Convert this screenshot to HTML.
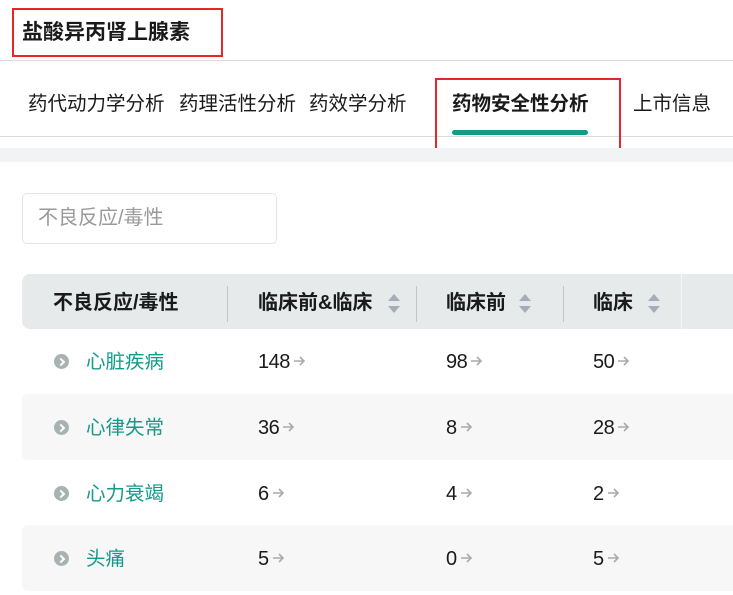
<!DOCTYPE html>
<html><head><meta charset="utf-8"><style>
*{margin:0;padding:0;box-sizing:border-box}
body{width:733px;height:595px;background:#fff;position:relative;overflow:hidden;font-family:"Liberation Sans","Noto Sans CJK SC",sans-serif;color:#1a1a1a}
.a{position:absolute;white-space:nowrap}
.tab{font-size:19.5px;top:91px;line-height:26px}
.h{font-size:20px;font-weight:bold;top:290px;line-height:26px}
.div{position:absolute;top:286px;width:1px;height:36px;background:#bfc6c6}
.sort{position:absolute;top:291px;width:14px;height:25px}
.row{position:absolute;left:22px;width:711px;height:66px}
.c{font-size:19.5px;line-height:26px}
.num{font-size:20px;letter-spacing:-0.5px}
.n{color:#139a88}
.ar{display:inline-block;width:13px;height:12px;margin-left:3px;vertical-align:1px}
.ic{position:absolute;left:54px;width:15px;height:15px;border-radius:50%;background:#a9b2b2}
.ic:after{content:"";position:absolute;left:3.5px;top:4.5px;width:4px;height:4px;border-right:2px solid #fff;border-top:2px solid #fff;transform:rotate(45deg)}
</style></head><body>
<svg width="0" height="0" style="position:absolute"><defs><symbol id="arr" viewBox="0 0 13 12"><path d="M1 6H11M7 2L11 6L7 10" stroke="#aaa" stroke-width="1.6" fill="none"/></symbol></defs></svg>
<div class="a" style="left:12px;top:8px;width:211px;height:49px;border:2px solid #e8262a"></div>
<div class="a" style="left:22px;top:19px;font-size:21px;font-weight:bold;line-height:28px">盐酸异丙肾上腺素</div>
<div class="a" style="left:0;top:60px;width:733px;height:1px;background:#dcdcdc"></div>
<div class="a tab" style="left:28px">药代动力学分析</div>
<div class="a tab" style="left:179px">药理活性分析</div>
<div class="a tab" style="left:309px">药效学分析</div>
<div class="a tab" style="left:452px;font-weight:bold">药物安全性分析</div>
<div class="a tab" style="left:633px">上市信息</div>
<div class="a" style="left:0;top:136px;width:733px;height:1px;background:#dcdcdc"></div>
<div class="a" style="left:452px;top:130px;width:136px;height:5px;border-radius:3px;background:#139a88"></div>
<div class="a" style="left:435px;top:78px;width:186px;height:72px;border:2px solid #e8262a"></div>
<div class="a" style="left:0;top:148px;width:733px;height:14px;background:#f2f3f5"></div>
<div class="a" style="left:22px;top:193px;width:255px;height:51px;border:1px solid #e3e4e6;border-radius:5px"></div>
<div class="a" style="left:38px;top:205px;font-size:20px;color:#9a9a9a;line-height:26px">不良反应/毒性</div>

<div class="a" style="left:22px;top:274px;width:720px;height:55px;background:#e6eaeb;border-radius:8px"></div>
<div class="a" style="left:681px;top:274px;width:1px;height:55px;background:#f4f6f6"></div>
<div class="a h" style="left:53px">不良反应/毒性</div>
<div class="div" style="left:227px"></div>
<div class="a h" style="left:258px">临床前&amp;临床</div>
<div class="div" style="left:416px"></div>
<div class="a h" style="left:446px">临床前</div>
<div class="div" style="left:563px"></div>
<div class="a h" style="left:593px">临床</div>
<svg class="sort" style="left:387px" viewBox="0 0 14 25"><path d="M1 10L7 3L13 10Z M1 15L7 22L13 15Z" fill="#a8abb8"/></svg>
<svg class="sort" style="left:518px" viewBox="0 0 14 25"><path d="M1 10L7 3L13 10Z M1 15L7 22L13 15Z" fill="#a8abb8"/></svg>
<svg class="sort" style="left:647px" viewBox="0 0 14 25"><path d="M1 10L7 3L13 10Z M1 15L7 22L13 15Z" fill="#a8abb8"/></svg>

<div class="row" style="top:394px;background:#f7f7f7;border-radius:6px 0 0 6px"></div>
<div class="row" style="top:525px;background:#f7f7f7;border-radius:6px 0 0 6px"></div>

<div class="ic" style="top:354px"></div>
<div class="a c n" style="left:86px;top:349px">心脏疾病</div>
<div class="a c num" style="left:258px;top:349px">148<svg class="ar"><use href="#arr"/></svg></div>
<div class="a c num" style="left:446px;top:349px">98<svg class="ar"><use href="#arr"/></svg></div>
<div class="a c num" style="left:593px;top:349px">50<svg class="ar"><use href="#arr"/></svg></div>

<div class="ic" style="top:420px"></div>
<div class="a c n" style="left:86px;top:415px">心律失常</div>
<div class="a c num" style="left:258px;top:415px">36<svg class="ar"><use href="#arr"/></svg></div>
<div class="a c num" style="left:446px;top:415px">8<svg class="ar"><use href="#arr"/></svg></div>
<div class="a c num" style="left:593px;top:415px">28<svg class="ar"><use href="#arr"/></svg></div>

<div class="ic" style="top:486px"></div>
<div class="a c n" style="left:86px;top:481px">心力衰竭</div>
<div class="a c num" style="left:258px;top:481px">6<svg class="ar"><use href="#arr"/></svg></div>
<div class="a c num" style="left:446px;top:481px">4<svg class="ar"><use href="#arr"/></svg></div>
<div class="a c num" style="left:593px;top:481px">2<svg class="ar"><use href="#arr"/></svg></div>

<div class="ic" style="top:551px"></div>
<div class="a c n" style="left:86px;top:546px">头痛</div>
<div class="a c num" style="left:258px;top:546px">5<svg class="ar"><use href="#arr"/></svg></div>
<div class="a c num" style="left:446px;top:546px">0<svg class="ar"><use href="#arr"/></svg></div>
<div class="a c num" style="left:593px;top:546px">5<svg class="ar"><use href="#arr"/></svg></div>
</body></html>
